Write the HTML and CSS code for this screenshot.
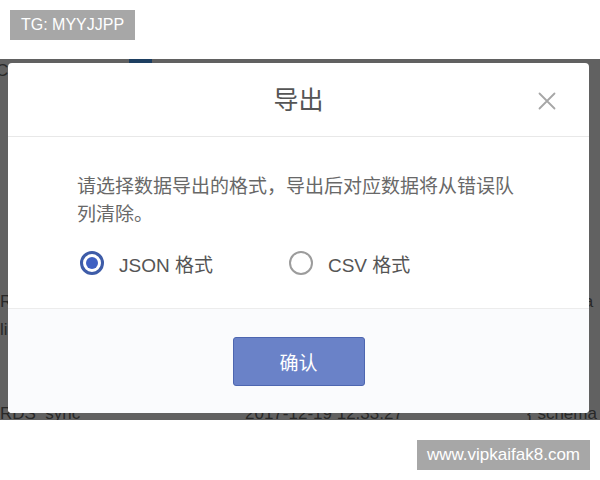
FILE: index.html
```html
<!DOCTYPE html>
<html lang="zh">
<head>
<meta charset="utf-8">
<title>导出</title>
<link rel="stylesheet" href="styles.css">
</head>
<body>
<div class="page">
  <div class="tag tag-top">TG: MYYJJPP</div>

  <div class="app">
    <div class="backdrop">
      <div class="tabbar"><span class="tab-active"></span></div>
      <div class="bg-row bg-head"><span class="c1">Channel</span></div>
      <div class="bg-row bg-r1">
        <div class="c1">RDS_sync<br>lines</div>
        <div class="c2">2017-12-19 12:31:02</div>
        <div class="c3">{ tablena<br>"type'</div>
      </div>
      <div class="bg-row bg-r2">
        <div class="c1">RDS_sync</div>
        <div class="c2">2017-12-19 12:33:27</div>
        <div class="c3">{ schema</div>
      </div>
    </div>

    <div class="overlay">
      <div class="modal">
        <div class="modal-header">
          <span></span>
          <h2 class="modal-title">导出</h2>
          <button class="modal-close" aria-label="关闭">
            <svg width="18" height="18" viewBox="0 0 18 18"><path d="M1.5 1.5 L16.5 16.5 M16.5 1.5 L1.5 16.5" stroke="#a6a6a6" stroke-width="1.8" fill="none" stroke-linecap="round"/></svg>
          </button>
        </div>
        <div class="modal-body">
          <p class="desc">请选择数据导出的格式，导出后对应数据将从错误队列清除。</p>
          <div class="radios">
            <label class="radio">
              <span class="radio-circle checked"><span class="radio-dot"></span></span>
              <span class="radio-label">JSON 格式</span>
            </label>
            <label class="radio">
              <span class="radio-circle"></span>
              <span class="radio-label">CSV 格式</span>
            </label>
          </div>
        </div>
        <div class="modal-footer">
          <button class="btn-primary">确认</button>
        </div>
      </div>
    </div>
  </div>

  <div class="tag tag-bottom">www.vipkaifak8.com</div>
</div>
</body>
</html>
```

FILE: styles.css
```css
* { box-sizing: border-box; }

html, body {
  margin: 0;
  padding: 0;
  background: #ffffff;
}

body {
  font-family: "Liberation Sans", "Noto Sans CJK SC", sans-serif;
}

.page {
  position: relative;
  width: 600px;
  height: 480px;
  overflow: hidden;
  padding-top: 59px;
}

.tag {
  position: absolute;
  background: #a7a7a7;
  color: #ffffff;
  height: 30px;
  line-height: 30px;
  text-align: center;
}

.tag-top {
  left: 10px;
  top: 10px;
  width: 125px;
  font-size: 16px;
}

.tag-bottom {
  left: 417px;
  top: 440px;
  width: 173px;
  font-size: 17px;
}

/* background app under the mask */
.app {
  position: relative;
  height: 361px;
  overflow: hidden;
  background: #ffffff;
}

.backdrop {
  display: flex;
  flex-direction: column;
  font-size: 17px;
  color: #6a6a6a;
}

.tabbar {
  height: 0;
  display: flex;
  padding-left: 129px;
}

.tab-active {
  display: block;
  width: 23px;
  height: 4px;
  background: #4fa6ff;
}

.bg-row {
  display: grid;
  grid-template-columns: 245px 282px 1fr;
  line-height: 28px;
  white-space: nowrap;
}

.bg-head {
  line-height: 24px;
  margin-left: -4px;
}

.bg-r1 {
  margin-top: 205px;
}

.bg-r2 {
  margin-top: 56px;
}

.c1, .c2, .c3 { overflow: hidden; }

/* mask + dialog */
.overlay {
  position: absolute;
  inset: 0;
  background: rgba(0, 0, 0, 0.62);
  display: flex;
  padding: 4px 11px 7px 8px;
}

.modal {
  flex: 1;
  display: flex;
  flex-direction: column;
  background: #ffffff;
  border-radius: 4px;
  overflow: hidden;
}

.modal-header {
  height: 74px;
  border-bottom: 1px solid #e8e8e8;
  display: grid;
  grid-template-columns: 1fr auto 1fr;
  align-items: center;
  padding: 0 33px;
}

.modal-title {
  margin: 0;
  font-size: 25px;
  font-weight: normal;
  color: #555555;
  line-height: 1;
  padding-top: 1px;
}

.modal-close {
  justify-self: end;
  width: 18px;
  height: 18px;
  padding: 0;
  border: 0;
  background: transparent;
  display: flex;
  margin-top: 2px;
}

.modal-body {
  height: 171px;
  padding: 36px 67px 0 69px;
}

.desc {
  margin: 0;
  font-size: 19px;
  line-height: 28px;
  color: #686868;
}

.radios {
  display: flex;
  gap: 76px;
  margin-top: 20px;
  padding-left: 3px;
}

.radio {
  display: flex;
  align-items: center;
  gap: 15px;
  height: 28px;
}

.radio-circle {
  width: 24px;
  height: 24px;
  border-radius: 50%;
  border: 2.5px solid #9c9c9c;
  display: flex;
  align-items: center;
  justify-content: center;
  background: #fff;
}

.radio-circle.checked {
  border: 3px solid #3e5ca8;
}

.radio-dot {
  width: 12px;
  height: 12px;
  border-radius: 50%;
  background: #3f60c2;
}

.radio-label {
  font-size: 19px;
  color: #555555;
}

.modal-footer {
  flex: 1;
  background: #fafbfd;
  border-top: 1px solid #ececec;
  display: flex;
  align-items: center;
  justify-content: center;
}

.btn-primary {
  width: 132px;
  height: 49px;
  border: 1px solid #4d66b0;
  border-radius: 3px;
  background: #6a82c8;
  color: #ffffff;
  font-size: 19px;
  font-family: "Liberation Sans", "Noto Sans CJK SC", sans-serif;
  padding: 0;
  margin-top: 1px;
}
```
